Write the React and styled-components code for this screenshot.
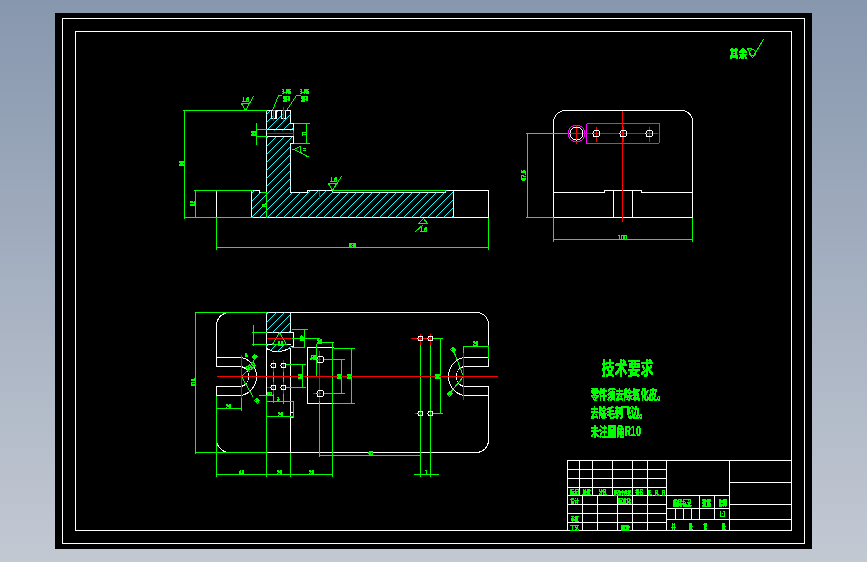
import React from "react";
import styled, { createGlobalStyle } from "styled-components";

const Global = createGlobalStyle`
  html, body { margin: 0; padding: 0; background: #8a9ab0; }
  #root { width: 867px; height: 562px; overflow: hidden; }
`;

const Viewport = styled.main`
  width: 867px;
  height: 562px;
  box-sizing: border-box;
  padding: 13px 55px;
  background: linear-gradient(180deg, #8797ae 0%, #c3c9d3 100%);
`;

const Sheet = styled.svg`
  display: block;
  width: 757px;
  height: 536px;
  background: #000;
`;

const Layer = styled.g`
  fill: none;
  stroke: ${(p) => p.$color};
  stroke-width: 1;
  shape-rendering: crispEdges;
`;

const Knockout = styled.rect`
  fill: #000;
  stroke: none;
`;

const Labels = styled.g`
  fill: #00ff00;
  stroke: none;
  filter: url(#aliased);
  font-family: "Liberation Sans", "Noto Sans CJK SC", sans-serif;
  font-weight: 700;
`;

const CjkLabels = styled(Labels)`
  font-family: "Noto Sans CJK SC", "Liberation Sans", sans-serif;
`;

const Label = styled.text`
  font-size: ${(p) => p.$size}px;
  text-anchor: ${(p) => p.$anchor || "middle"};
  dominant-baseline: central;
`;

/* natural width estimate: CJK glyphs take a full em, digits and Latin about half */
const naturalWidth = (text, size) =>
  [...String(text)].reduce((sum, ch) => sum + (ch.charCodeAt(0) > 0x2e7f ? size : size * 0.56), 0);

const T = ({ x, y, s = 7, r, w, a, children }) => {
  const size = Number(s);
  const k = w ? Number(w) / naturalWidth(children, size) : 0.68;
  const parts = [`translate(${x} ${y})`];
  if (r) parts.push(`rotate(${r})`);
  parts.push(`scale(${k.toFixed(3)} 1)`, `translate(${-x} ${-y})`);
  return (
    <Label x={x} y={y} $size={size} $anchor={a} transform={parts.join(" ")}>
      {children}
    </Label>
  );
};

const frontProfile =
  "M266 110H290V123H293V143H290V192H307V190H332V192H445V190H453V217H251V190H259V192H266Z";
const planTopCut = "M266 312H290V332H266Z";
const planBottomCut = "M266 344H290V347Q277 355 266 348Z";

/* 45 degree section lines, 8px apart; clipped to each cut face */
const hatchLines = (() => {
  let d = "";
  for (let c = 300; c < 1000; c += 8) d += `M${c - 300} 300L${c} 0`;
  for (let c = 300; c < 1000; c += 8) d += `M${c - 300} 500L${c - 100} 300`;
  return d;
})();

const whitePaths = [
  "M62 18H804V543H62Z",
  "M75 31H791V530H75Z",
  frontProfile,
  "M453 190H488V217H453",
  "M251 217H216V190",
  "M553 217V122A12 12 0 0 1 565 110H681A11 11 0 0 1 692 122V217Z",
  "M553 192H604V190H641V192H692",
  "M613 190V217M632 190V217",
  "M229 312H476A12 12 0 0 1 488 324V366H463M463 386H488V441A12 12 0 0 1 476 452H229A13 13 0 0 1 216 439V386H241M241 366H216V325A13 13 0 0 1 229 312",
  "M216 357H241A19.5 19.5 0 0 1 241 395H216",
  "M241 366A10.5 10.5 0 0 1 241 386",
  "M488 357H463A19.5 19.5 0 0 0 463 395H488",
  "M463 366A10.5 10.5 0 0 0 463 386",
  "M266 312V452M290 312V332M290 347V452",
  "M266 332H293V346H290M266 344H290M266 348Q277 355 290 347",
  "M290 412H293V417H290",
  "M333 347H307V403H333",
];

const greenPaths = [
  "M182 110H266M184 110V218M183 217H252",
  "M193 190H252M195 190V217",
  "M216 217V249M488 217V249M216 247H488",
  "M256 122V144M256 129H266M256 136H266",
  "M293 123H309M293 143H309M306 123V143",
  "M293 149L300 146V152ZM300 152L307 156H308",
  "M266 192V217M260 192H266",
  "M332 190H445",
  "M241 103H249L245 110L241 103M245 110L253 96",
  "M328 183H336L332 190L328 183M332 190L341 176",
  "M418 223H427L423 218ZM423 224L415 231",
  "M272 110L278 95H281M286 110L296 95H300",
  "M525 133H568M527 133V217M525 217H553",
  "M553 217V241M692 217V241M553 239H692",
  "M747 48L752 57L763 39M747 48H751",
  "M194 312H266M195 312V453M194 452H266",
  "M216 395V476M266 395V476M290 452V476M332 342V476M216 474H332",
  "M216 408H241M241 394V410",
  "M253 324V345M251 332H266M251 344H266",
  "M291 329H307M304 329V347M291 347H304",
  "M279 332L272 344H286L279 332",
  "M291 338H319M316 343V376M316 342H333",
  "M284 364H305M302 364V387M284 387H305",
  "M273 365V402M283 365V403M266 401H293M266 416H293M293 400V417",
  "M258 395H272",
  "M312 376H316M296 376H303",
  "M323 359H344M341 359V393M323 393H344",
  "M333 348H354M333 403H354M351 348V403",
  "M319 393V456M319 455H420M420 339V476M430 339V476M413 474H438",
  "M431 338H442M431 413H442M440 338V413",
  "M463 345V376M463 346H488M488 344V358",
  "M241 376L252 365L254 358M241 376L253 397",
  "M463 376L453 350M463 376L449 393",
];

const redPaths = [
  "M283 106V120M273 110V120M266 133H293M319 190V198",
  "M622 110V221M586 133H657M567 133H586M576 124V143M596 126V141M623 126V141M649 126V141",
  "M216 376H497M241 354V397M463 352V399",
  "M266 338H291",
  "M273 359V371M283 359V371M273 381V393M283 381V393M266 387H273",
  "M319 350V400M312 359H320M312 393H320",
  "M410 338H430M420 333V344M430 333V344M414 413H420",
];

const tableLines = [
  "M567 460H666V530H567Z",
  "M567 469H666M567 478H666M567 487H666M567 495H666M567 504H666M567 513H666M567 522H666",
  "M579 460V495M592 460V495M612 460V495M632 460V495M647 460V495",
  "M582 495V530M597 495V530M617 495V530M632 495V530M647 495V530",
  "M666 495H729M666 508H729M666 519H729",
  "M699 495V519M714 495V519M675 508V519M683 508V519M691 508V519",
  "M729 460V530M729 482H791M729 504H791M729 519H791",
  "M666 460H791",
];

const holes = [
  [576, 133, 6.5],
  [596, 133, 3.5], [623, 133, 3.5], [649, 133, 3.5],
  [273, 365, 2.5], [283, 365, 2.5], [273, 387, 2.5], [283, 387, 2.5],
  [320, 359, 3.5], [320, 393, 3.5],
  [420, 338, 2.5], [430, 338, 2.5], [420, 413, 2.5], [430, 413, 2.5],
];

const join = (list) => list.join(" ");

export default function App() {
  return (
    <Viewport>
      <Global />
      <Sheet viewBox="55 13 757 536" xmlns="http://www.w3.org/2000/svg">
        <defs>
          <clipPath id="cutFaces">
            <path d={`${frontProfile} ${planTopCut} ${planBottomCut}`} />
          </clipPath>
          <filter id="aliased" x="-5%" y="-5%" width="110%" height="110%" colorInterpolationFilters="sRGB">
            <feComponentTransfer>
              <feFuncA type="discrete" tableValues="0 1 1 1 1" />
            </feComponentTransfer>
          </filter>
        </defs>

        <g transform="translate(.5 .5)">
          <Layer $color="#ffffff">
            <path d={join(whitePaths)} />
            <path d={join(tableLines)} />
          </Layer>

          <Layer $color="#00ffff" clipPath="url(#cutFaces)">
            <path d={hatchLines} />
          </Layer>
          <Knockout x="272" y="110" width="3" height="8" />
          <Knockout x="282" y="110" width="3" height="8" />
          <Knockout x="267" y="130" width="26" height="6" />

          <Layer $color="#ffffff">
            <path d="M266 129H293M266 136H293M271 110V118H276V110M275 110V118M281 110V118H285V110" />
          </Layer>

          <Layer $color="#00ff00">
            <path d={join(greenPaths)} />
            <circle cx="752" cy="52" r="3" />
          </Layer>

          <Layer $color="#ff00ff">
            <circle cx="576" cy="133" r="8.5" />
            <rect x="586" y="123" width="73" height="20" rx="1.5" />
          </Layer>

          <Layer $color="#ff0000">
            <path d={join(redPaths)} />
          </Layer>

          <Layer $color="#ffffff">
            {holes.map(([cx, cy, r]) => (
              <circle key={`${cx}-${cy}`} cx={cx} cy={cy} r={r} />
            ))}
          </Layer>

          <Labels>
            <T x="181" y="163" r="-90">56</T>
            <T x="192" y="203" r="-90">12</T>
            <T x="253" y="133" r="-90">10</T>
            <T x="304" y="133" r="-90">11</T>
            <T x="264" y="205" r="-90">8</T>
            <T x="304" y="149">=</T>
            <T x="352" y="245">136</T>
            <T x="245" y="99">1.6</T>
            <T x="333" y="179">1.6</T>
            <T x="423" y="229">1.6</T>
            <T x="523" y="175" r="-90" s="8">67.5</T>
            <T x="622" y="237" s="8">100</T>
            <T x="193" y="382" r="-90">113</T>
            <T x="241" y="472">44</T>
            <T x="279" y="472">20</T>
            <T x="311" y="472">28</T>
            <T x="228" y="406">20</T>
            <T x="250" y="366" r="-45" s="8">R10</T>
            <T x="246" y="354" s="6">8</T>
            <T x="254" y="356" r="-45" s="6">R5</T>
            <T x="257" y="400" r="45" s="6">R5</T>
            <T x="453" y="349" r="45" s="6">R8</T>
            <T x="449" y="393" r="-45" s="6">R5</T>
            <T x="475" y="343">20</T>
            <T x="302" y="338" r="-90" s="8">12</T>
            <T x="319" y="341">10</T>
            <T x="313" y="357">R5</T>
            <T x="280" y="343" s="8">11</T>
            <T x="269" y="393" r="-90">8</T>
            <T x="278" y="398" s="6">3</T>
            <T x="280" y="414">20</T>
            <T x="300" y="376" r="-90">14</T>
            <T x="339" y="376" r="-90">30</T>
            <T x="349" y="376" r="-90">38</T>
            <T x="437" y="376" r="-90">50</T>
            <T x="370" y="452" s="6">45</T>
            <T x="426" y="472" s="8">1</T>
          </Labels>

          <CjkLabels>
            <T x="286" y="91" s="6" w="9">3-M6</T>
            <T x="286" y="98" s="6" w="7">深8</T>
            <T x="304" y="91" s="6" w="9">3-M6</T>
            <T x="304" y="98" s="6" w="7">深8</T>
            <T x="738" y="53" s="11" w="18">其余</T>
            <T x="627" y="367" s="18" w="52">技术要求</T>
            <T x="590" y="393" s="13" a="start" w="75">零件须去除氧化皮。</T>
            <T x="590" y="411" s="13" a="start" w="57">去除毛刺飞边。</T>
            <T x="590" y="430" s="13" a="start" w="49">未注圆角R10</T>
            <T x="574" y="491" s="6" w="9">标记</T>
            <T x="586" y="491" s="6" w="8">处数</T>
            <T x="602" y="491" s="6" w="8">分区</T>
            <T x="622" y="491" s="6" w="17">更改文件号</T>
            <T x="639" y="491" s="6" w="8">签名</T>
            <T x="656" y="491" s="6" w="17">年、月、日</T>
            <T x="574" y="500" s="6" w="8">设计</T>
            <T x="624" y="500" s="6" w="13">标准化</T>
            <T x="574" y="518" s="6" w="8">审核</T>
            <T x="574" y="527" s="6" w="9">工艺</T>
            <T x="625" y="527" s="6" w="9">批准</T>
            <T x="682" y="502" s="7.5" w="18">阶段标记</T>
            <T x="706" y="502" s="7.5" w="9">重量</T>
            <T x="722" y="502" s="7.5" w="8">比例</T>
            <T x="722" y="514" s="7" w="6">1:1</T>
            <T x="673" y="525" s="7" w="4">共</T>
            <T x="690" y="525" s="7" w="4">张</T>
            <T x="705" y="525" s="7" w="4">第</T>
            <T x="723" y="525" s="7" w="4">张</T>
          </CjkLabels>
        </g>
      </Sheet>
    </Viewport>
  );
}
